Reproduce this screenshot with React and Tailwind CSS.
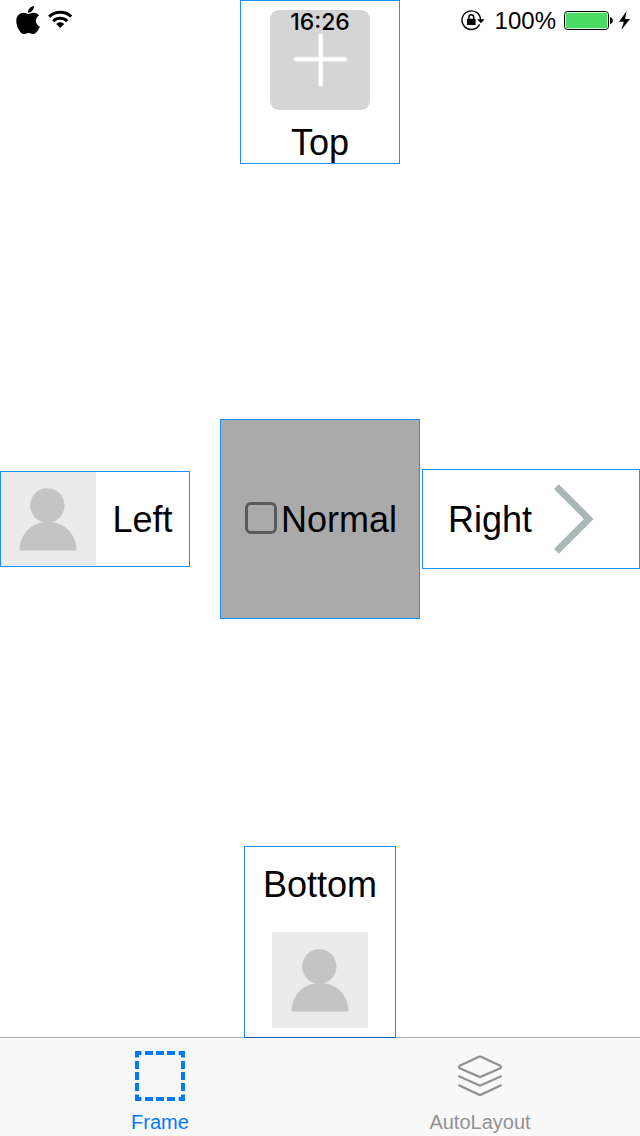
import React, { useState } from "react";
import { FaApple } from "react-icons/fa";

function WifiIcon() {
  return (
    <svg className="h-[19px] w-6" viewBox="0 0 24 19" aria-hidden="true">
      <path d="M1.2 6.6C7.2 .9 17.2 .9 23.2 6.6" fill="none" stroke="#000" strokeWidth="3" />
      <path d="M5.2 11.2C9.1 7.4 15.3 7.4 19.2 11.2" fill="none" stroke="#000" strokeWidth="3" />
      <path d="M8.2 13.9C10.6 11.8 13.8 11.8 16.2 13.9L12.2 18Z" fill="#000" />
    </svg>
  );
}

function RotationLockIcon() {
  return (
    <svg className="h-[21px] w-6" viewBox="0 0 24 21" aria-hidden="true">
      <path d="M18.6 14.4A9.3 9.3 0 1 1 19.6 10" fill="none" stroke="#000" strokeWidth="1.4" />
      <path d="M16.2 9.2h7.4l-3.7 4z" fill="#000" />
      <rect x="6" y="8.8" width="8.6" height="6.2" rx=".6" fill="#000" />
      <path d="M7.9 9.4V7.2a2.4 2.4 0 0 1 4.8 0v2.2" fill="none" stroke="#000" strokeWidth="1.5" />
    </svg>
  );
}

function BatteryIcon() {
  return (
    <svg className="h-[19px] w-[49px]" viewBox="0 0 49 19" aria-hidden="true">
      <rect x=".5" y=".5" width="44" height="18" rx="3" fill="#fff" stroke="#000" />
      <rect x="1.7" y="1.7" width="41.6" height="15.6" rx="1.8" fill="#4cd964" />
      <path d="M46 6c3.8.9 3.8 6.1 0 7z" fill="#000" />
    </svg>
  );
}

function BoltIcon() {
  return (
    <svg className="h-[19px] w-[11px]" viewBox="0 0 11 19" aria-hidden="true">
      <path d="M7.6 0 0 10.8h4.8L2.4 19 11 7.9H6.1z" fill="#000" />
    </svg>
  );
}

function PlusTile() {
  return (
    <svg className="size-[100px]" viewBox="0 0 100 100" aria-hidden="true">
      <rect width="100" height="100" rx="9" fill="#d5d5d5" />
      <path d="M50.7 25.5v49M26 49.2h49" stroke="#fff" strokeOpacity=".4" strokeWidth="5.4" strokeLinecap="round" />
      <path d="M50.7 25.5v49M26 49.2h49" stroke="#fff" strokeWidth="3.6" strokeLinecap="round" />
    </svg>
  );
}

function Avatar({ className, viewBox }) {
  return (
    <svg className={className} viewBox={viewBox} aria-hidden="true">
      <rect width="96" height="96" fill="#ebebeb" />
      <circle cx="47.3" cy="34.5" r="17.2" fill="#c4c4c4" />
      <path d="M19.4 79.6C20 63 31 51 48 51s28 12 28.6 28.6z" fill="#c4c4c4" />
    </svg>
  );
}

function Chevron() {
  return (
    <svg className="h-[70px] w-10" viewBox="0 0 40 70" aria-hidden="true">
      <path d="M2.4 2.6 34.8 35 2.4 67.4" fill="none" stroke="#a9b7b7" strokeWidth="6.8" />
    </svg>
  );
}

function FrameIcon() {
  return (
    <svg className="size-[50px]" viewBox="0 0 50 50" fill="none" stroke="currentColor" strokeWidth="4" aria-hidden="true">
      <path d="M2 6.4V2h4.4M43.6 2H48v4.4M48 43.6V48h-4.4M6.4 48H2v-4.4" />
      <path d="M10 2h8M21 2h8M32 2h8M10 48h8M21 48h8M32 48h8" />
      <path d="M2 10v8M2 21v8M2 32v8M48 10v8M48 21v8M48 32v8" />
    </svg>
  );
}

function LayersIcon() {
  return (
    <svg
      className="size-[50px]"
      viewBox="0 0 50 50"
      fill="none"
      stroke="currentColor"
      strokeWidth="2.3"
      strokeLinejoin="round"
      aria-hidden="true"
    >
      <path d="M24 5.8Q25 5.3 26 5.8L44.8 14.5Q47.2 16 44.8 17.5L26 25.6Q25 26 24 25.6L5.2 17.5Q2.8 16 5.2 14.5Z" />
      <path d="M3.4 25 24 34.3Q25 34.7 26 34.3L46.6 25" />
      <path d="M3.4 34 24 43.6Q25 44 26 43.6L46.6 34" />
    </svg>
  );
}

function StatusBar() {
  return (
    <header className="pointer-events-none absolute inset-x-0 top-0 z-10 grid h-[41px] grid-cols-[1fr_auto_1fr] items-center px-[10px] text-2xl">
      <div className="flex items-center gap-2 pb-0.5 pl-1.5">
        <FaApple className="h-8 w-6" aria-hidden="true" />
        <WifiIcon />
      </div>
      <time className="pt-0.5 font-[Inter] text-[23px] leading-7 font-medium">16:26</time>
      <div className="flex items-center justify-end">
        <RotationLockIcon />
        <span className="mr-2 ml-2.5">100%</span>
        <BatteryIcon />
        <span className="ml-1.5">
          <BoltIcon />
        </span>
      </div>
    </header>
  );
}

function Tab({ label, icon, active, onClick }) {
  return (
    <button
      type="button"
      aria-current={active ? "page" : undefined}
      onClick={onClick}
      className={`flex flex-1 flex-col items-center gap-[11px] pt-[13px] pb-1 text-xl leading-5 ${
        active ? "text-[#007aff]" : "text-[#929292]"
      }`}
    >
      {icon}
      {label}
    </button>
  );
}

export default function App() {
  const [tab, setTab] = useState("frame");

  return (
    <div className="relative flex min-h-screen flex-col bg-white font-['Liberation_Sans',Arial,sans-serif] text-black">
      <StatusBar />

      <main className="-mb-px grid flex-1 grid-rows-[1fr_auto_1fr] text-4xl">
        <button
          type="button"
          className="flex w-40 flex-col items-center gap-[13px] self-start justify-self-center border border-[#1e90ff] pt-[9px]"
        >
          <PlusTile />
          Top
        </button>

        <div className="grid grid-cols-[1fr_auto_1fr] items-center">
          <button type="button" className="flex w-[190px] items-center border border-[#1e90ff]">
            <Avatar className="h-[94px] w-[95px]" viewBox="1 1 95 94" />
            <span className="flex-1 pt-0.5 text-center">Left</span>
          </button>
          <label className="flex size-[200px] items-center justify-center gap-1 border border-[#1e90ff] bg-[#aaaaaa] pl-0.5">
            <input
              type="checkbox"
              className="mb-0.5 size-8 appearance-none rounded-md border-3 border-[#5a5a5a] checked:bg-[#5a5a5a]"
            />
            <span className="pt-0.5">Normal</span>
          </label>
          <button
            type="button"
            className="flex h-[100px] w-[218px] items-center justify-end gap-[22px] justify-self-end border border-[#1e90ff] pr-[45px]"
          >
            <span className="pt-0.5">Right</span>
            <Chevron />
          </button>
        </div>

        <button
          type="button"
          className="flex w-[152px] flex-col items-center gap-[27px] self-end justify-self-center border border-[#1e90ff] pt-[18px] pb-[9px]"
        >
          Bottom
          <Avatar className="size-24" viewBox="0 0 96 96" />
        </button>
      </main>

      <nav className="relative flex border-t border-black/30 bg-[#f8f8f8] bg-clip-padding">
        <Tab label="Frame" icon={<FrameIcon />} active={tab === "frame"} onClick={() => setTab("frame")} />
        <Tab label="AutoLayout" icon={<LayersIcon />} active={tab === "auto"} onClick={() => setTab("auto")} />
      </nav>
    </div>
  );
}
